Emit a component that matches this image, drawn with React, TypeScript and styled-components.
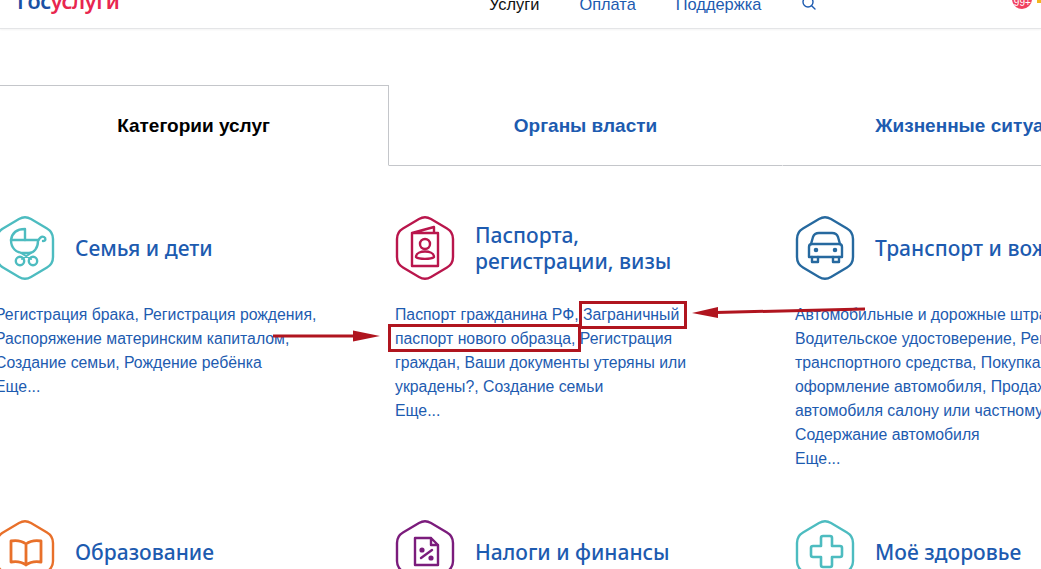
import { ReactNode } from 'react';
import styled, { createGlobalStyle } from 'styled-components';

const BLUE = '#1d5bb0';
const RED = '#b0151f';

const GlobalStyle = createGlobalStyle`
  html, body {
    margin: 0;
    padding: 0;
    background: #fff;
    overflow: hidden;
  }
  #root {
    height: 569px;
  }
`;

const Page = styled.div`
  position: relative;
  width: 1041px;
  height: 569px;
  overflow: hidden;
  font-family: 'Liberation Sans', Arial, sans-serif;
`;

const Header = styled.header`
  height: 28px;
  border-bottom: 1px solid #e4e5e7;
  box-shadow: 0 1px 2px rgba(0, 0, 0, 0.05);
  display: flex;
  align-items: flex-end;
  overflow: hidden;
  padding-left: 17px;
`;

const Logo = styled.div`
  width: 472px;
  margin-bottom: 15px;
  font-family: 'Noto Sans', sans-serif;
  font-size: 21.5px;
  line-height: 24px;
  font-weight: 600;
  letter-spacing: -0.4px;
  color: #1b50a4;
  flex-shrink: 0;
  span {
    color: #e8264f;
  }
`;

const Nav = styled.nav`
  display: flex;
  align-items: flex-end;
  gap: 40px;
  margin-bottom: 14px;
`;

const NavItem = styled.a<{ $active?: boolean }>`
  font-size: 16.4px;
  line-height: 20px;
  color: ${(props) => (props.$active ? '#111' : BLUE)};
`;

const SearchIcon = styled.svg`
  width: 16px;
  height: 16px;
  margin: 0 0 3px 0;
`;

const Badge = styled.div`
  width: 20px;
  height: 20px;
  border-radius: 50%;
  background: #f0405f;
  color: #fff;
  font-size: 10px;
  line-height: 27px;
  text-align: center;
  margin: 0 0 19px 195px;
  flex-shrink: 0;
`;

const Bell = styled.div`
  width: 4px;
  height: 3px;
  margin: 0 0 25px 5px;
  background: #f3b61f;
  flex-shrink: 0;
`;

const Tabs = styled.div`
  display: flex;
  margin: 56px 0 50px -1px;
`;

const Tab = styled.a<{ $active?: boolean; $width: number }>`
  flex: 0 0 ${(props) => props.$width}px;
  height: 79px;
  font-size: 19px;
  font-weight: 700;
  line-height: 80px;
  text-align: center;
  white-space: nowrap;
  color: ${(props) => (props.$active ? '#000' : BLUE)};
  border-top: 1px solid ${(props) => (props.$active ? '#c4c6ca' : 'transparent')};
  border-right: 1px solid ${(props) => (props.$active ? '#c4c6ca' : 'transparent')};
  border-bottom: 1px solid ${(props) => (props.$active ? 'transparent' : '#c4c6ca')};
`;

const Grid = styled.div`
  display: grid;
  grid-template-columns: repeat(3, 400px);
  margin-left: -5px;
  width: 1200px;
`;

const Card = styled.section`
  height: 304px;
`;

const CardHead = styled.div`
  display: flex;
  align-items: center;
  gap: 20px;
  height: 64px;
`;

const IconBox = styled.svg`
  width: 60px;
  height: 64px;
  flex-shrink: 0;
`;

const CardTitle = styled.h3`
  margin: 0;
  font-family: 'Noto Sans', sans-serif;
  font-size: 21px;
  line-height: 26px;
  font-weight: 500;
  color: ${BLUE};
  white-space: nowrap;
`;

const Links = styled.p`
  margin: 23px 0 0;
  width: 306px;
  font-size: 15.8px;
  line-height: 24px;
  color: ${BLUE};
  white-space: nowrap;
`;

const More = styled.span`
  display: block;
`;

const Annotations = styled.svg`
  position: absolute;
  left: 0;
  top: 0;
  width: 1041px;
  height: 569px;
  pointer-events: none;
`;

function Hex({ color, children }: { color: string; children: ReactNode }) {
  return (
    <IconBox viewBox="0 0 60 64" fill="none" stroke={color} strokeWidth="2.4" strokeLinecap="round" strokeLinejoin="round">
      <path d="M24 3 Q30 -0.4 36 3 L52 12.5 Q58 16 58 23 V41 Q58 48 52 51.5 L36 61 Q30 64.4 24 61 L8 51.5 Q2 48 2 41 V23 Q2 16 8 12.5 Z" />
      {children}
    </IconBox>
  );
}

const cards = [
  {
    color: '#4dbcc0',
    title: ['Семья и дети'],
    links: ['Регистрация брака, Регистрация рождения,', 'Распоряжение материнским капиталом,', 'Создание семьи, Рождение ребёнка'],
    icon: (
      <>
        <path d="M16 24 C16 32 21 37 29 37 H34 C39 37 43 32 43 25 C45 21 47 20 49 21 C51 22 51 25 48 25" />
        <path d="M16 24 H30 V13 C22 13 17 17 16 24 Z" />
        <path d="M30 24 H43" />
        <circle cx="25" cy="45" r="4.2" />
        <circle cx="38" cy="45" r="4.2" />
        <path d="M26 37 L36 43 M36 37 L27 43" strokeWidth="2" />
      </>
    ),
  },
  {
    color: '#b9164c',
    title: ['Паспорта,', 'регистрации, визы'],
    links: ['Паспорт гражданина РФ, Заграничный', 'паспорт нового образца, Регистрация', 'граждан, Ваши документы утеряны или', 'украдены?, Создание семьи'],
    icon: (
      <>
        <path d="M17 17 L39 11 V17 M17 17 V50 H43 V17 H17 Z" />
        <circle cx="30" cy="28" r="5" />
        <path d="M21 41 C21 37 26 35.5 30 35.5 C34 35.5 39 37 39 41 C36 43.5 24 43.5 21 41 Z" />
      </>
    ),
  },
  {
    color: '#26699f',
    title: ['Транспорт и вождение'],
    links: ['Автомобильные и дорожные штрафы,', 'Водительское удостоверение, Регистрация', 'транспортного средства, Покупка и', 'оформление автомобиля, Продажа', 'автомобиля салону или частному лицу,', 'Содержание автомобиля'],
    icon: (
      <>
        <path d="M16 28 L18 21 C19 18 21 17 24 17 H37 C40 17 42 18 43 21 L45 28" />
        <path d="M14 31 C14 29 15 28 17 28 H44 C46 28 47 29 47 31 V41 H14 Z" />
        <path d="M17 41 V46 H23 V41 M38 41 V46 H44 V41" />
        <circle cx="21" cy="34" r="1.1" fill="#26699f" />
        <circle cx="40" cy="34" r="1.1" fill="#26699f" />
      </>
    ),
  },
  {
    color: '#e8702a',
    title: ['Образование'],
    links: [],
    icon: <path d="M31 24 C27 21 22 20 16 21 V42 C22 41 27 42 31 45 C35 42 40 41 46 42 V21 C40 20 35 21 31 24 Z M31 24 V45" strokeWidth="2.8" />,
  },
  {
    color: '#7b1c7c',
    title: ['Налоги и финансы'],
    links: [],
    icon: (
      <>
        <path d="M20 18 H36 L43 25 V45 H20 Z M36 18 V25 H43" />
        <path d="M26 38 L37 30" />
        <circle cx="27" cy="30" r="1.4" fill="#7b1c7c" />
        <circle cx="36" cy="38" r="1.4" fill="#7b1c7c" />
      </>
    ),
  },
  {
    color: '#4dbcc0',
    title: ['Моё здоровье'],
    links: [],
    icon: <path d="M26 18 a2 2 0 0 1 2 -2 H35 a2 2 0 0 1 2 2 V26 H45 a2 2 0 0 1 2 2 V35 a2 2 0 0 1 -2 2 H37 V45 a2 2 0 0 1 -2 2 H28 a2 2 0 0 1 -2 -2 V37 H18 a2 2 0 0 1 -2 -2 V28 a2 2 0 0 1 2 -2 H26 Z" strokeWidth="2.6" />,
  },
];

export default function App() {
  return (
    <Page>
      <GlobalStyle />
      <Header>
        <Logo>
          Гос<span>услуги</span>
        </Logo>
        <Nav>
          <NavItem $active>Услуги</NavItem>
          <NavItem>Оплата</NavItem>
          <NavItem>Поддержка</NavItem>
          <SearchIcon viewBox="0 0 16 16" fill="none" stroke={BLUE} strokeWidth="1.4" strokeLinecap="round">
            <circle cx="7" cy="7" r="5" />
            <path d="M10.6 10.8 L14 14" />
          </SearchIcon>
        </Nav>
        <Badge>99+</Badge>
        <Bell />
      </Header>
      <Tabs>
        <Tab $active $width={389}>Категории услуг</Tab>
        <Tab $width={393}>Органы власти</Tab>
        <Tab $width={388}>Жизненные ситуации</Tab>
      </Tabs>
      <Grid>
        {cards.map((card) => (
          <Card key={card.title[0]}>
            <CardHead>
              <Hex color={card.color}>{card.icon}</Hex>
              <CardTitle>
                {card.title.map((line) => (
                  <div key={line}>{line}</div>
                ))}
              </CardTitle>
            </CardHead>
            {card.links.length > 0 && (
              <Links>
                {card.links.map((line) => (
                  <More key={line}>{line}</More>
                ))}
                <More>Еще...</More>
              </Links>
            )}
          </Card>
        ))}
      </Grid>
      <Annotations viewBox="0 0 1041 569" fill="none">
        <rect x="580.5" y="302.5" width="105" height="25" stroke={RED} strokeWidth="3" />
        <rect x="389.5" y="325.5" width="190" height="25" stroke={RED} strokeWidth="3" />
        <path d="M273 336 L356 336" stroke={RED} strokeWidth="3" />
        <path d="M353 330.5 L380 336 L353 341.5 Z" fill={RED} />
        <path d="M865 309 L716 312.5" stroke={RED} strokeWidth="3" />
        <path d="M718 307 L692 313 L718 318 Z" fill={RED} />
      </Annotations>
    </Page>
  );
}
